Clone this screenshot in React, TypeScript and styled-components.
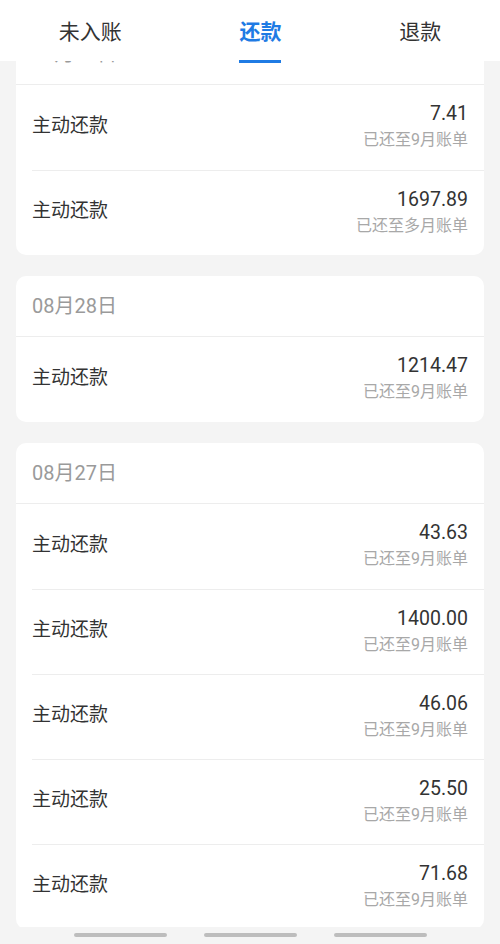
import React from "react";
import styled, { createGlobalStyle } from "styled-components";

const GlobalStyle = createGlobalStyle`
  html, body {
    margin: 0;
    padding: 0;
    background: #f4f4f4;
  }
  body {
    font-family: Roboto, "Noto Sans CJK SC", "Noto Sans", sans-serif;
    -webkit-font-smoothing: antialiased;
  }
  * { box-sizing: border-box; }
`;

const Page = styled.div`
  width: 500px;
  height: 944px;
  display: flex;
  flex-direction: column;
  background: #f4f4f4;
  overflow: hidden;
`;

const TabBar = styled.nav`
  position: relative;
  z-index: 2;
  flex: 0 0 61px;
  height: 61px;
  background: #ffffff;
  display: flex;
  justify-content: space-around;
  align-items: center;
`;

const Tab = styled.div<{ $active?: boolean }>`
  position: relative;
  padding-top: 3px;
  font-size: 21px;
  line-height: 30px;
  font-weight: ${(p) => (p.$active ? 700 : 400)};
  color: ${(p) => (p.$active ? "#1f7be4" : "#333333")};

  &::after {
    content: "";
    display: ${(p) => (p.$active ? "block" : "none")};
    position: absolute;
    left: 0;
    right: 0;
    top: 46px;
    height: 3px;
    background: #1f7be4;
  }
`;

const Viewport = styled.main`
  flex: 1 1 auto;
  overflow: hidden;
`;

const List = styled.div`
  margin-top: -37px;
  padding: 0 16px;
  display: flex;
  flex-direction: column;
  gap: 21px;
`;

const Card = styled.section`
  background: #ffffff;
  border-radius: 10px;
  overflow: hidden;
`;

const DateHeader = styled.div`
  height: 61px;
  display: flex;
  align-items: center;
  padding: 0 16px 4px;
  border-bottom: 1px solid #ededed;
  font-size: 20px;
  color: #9a9a9a;
`;

const Row = styled.div`
  height: 85px;
  margin-left: 16px;
  padding-right: 16px;
  display: flex;
  justify-content: space-between;
  align-items: center;

  & + & {
    border-top: 1px solid #ededed;
  }
`;

const Title = styled.div`
  font-size: 19px;
  color: #333333;
  line-height: 26px;
  padding-bottom: 4px;
`;

const Right = styled.div`
  align-self: flex-start;
  padding-top: 16px;
  display: flex;
  flex-direction: column;
  align-items: flex-end;
`;

const Amount = styled.div`
  font-size: 19.5px;
  line-height: 26px;
  color: #333333;
`;

const Note = styled.div`
  font-size: 16px;
  line-height: 24px;
  margin-top: 1px;
  color: #a8a8a8;
`;

const BottomBar = styled.footer`
  flex: 0 0 17px;
  height: 17px;
  background: #f4f4f4;
  display: flex;
  justify-content: center;
  gap: 37px;
  padding-top: 6px;
`;

const Pill = styled.span`
  width: 93px;
  height: 4px;
  border-radius: 2px;
  background: #bdbdbd;
`;

type Item = { amount: string; note: string };
type Group = { date: string; items: Item[] };

const groups: Group[] = [
  {
    date: "08月29日",
    items: [
      { amount: "7.41", note: "已还至9月账单" },
      { amount: "1697.89", note: "已还至多月账单" },
    ],
  },
  {
    date: "08月28日",
    items: [{ amount: "1214.47", note: "已还至9月账单" }],
  },
  {
    date: "08月27日",
    items: [
      { amount: "43.63", note: "已还至9月账单" },
      { amount: "1400.00", note: "已还至9月账单" },
      { amount: "46.06", note: "已还至9月账单" },
      { amount: "25.50", note: "已还至9月账单" },
      { amount: "71.68", note: "已还至9月账单" },
    ],
  },
];

export default function App() {
  return (
    <>
      <GlobalStyle />
      <Page>
        <TabBar>
          <Tab>未入账</Tab>
          <Tab $active>还款</Tab>
          <Tab>退款</Tab>
        </TabBar>
        <Viewport>
          <List>
            {groups.map((g, gi) => (
              <Card key={gi}>
                <DateHeader>{g.date}</DateHeader>
                {g.items.map((it, ii) => (
                  <Row key={ii}>
                    <Title>主动还款</Title>
                    <Right>
                      <Amount>{it.amount}</Amount>
                      <Note>{it.note}</Note>
                    </Right>
                  </Row>
                ))}
              </Card>
            ))}
          </List>
        </Viewport>
        <BottomBar>
          <Pill />
          <Pill />
          <Pill />
        </BottomBar>
      </Page>
    </>
  );
}
